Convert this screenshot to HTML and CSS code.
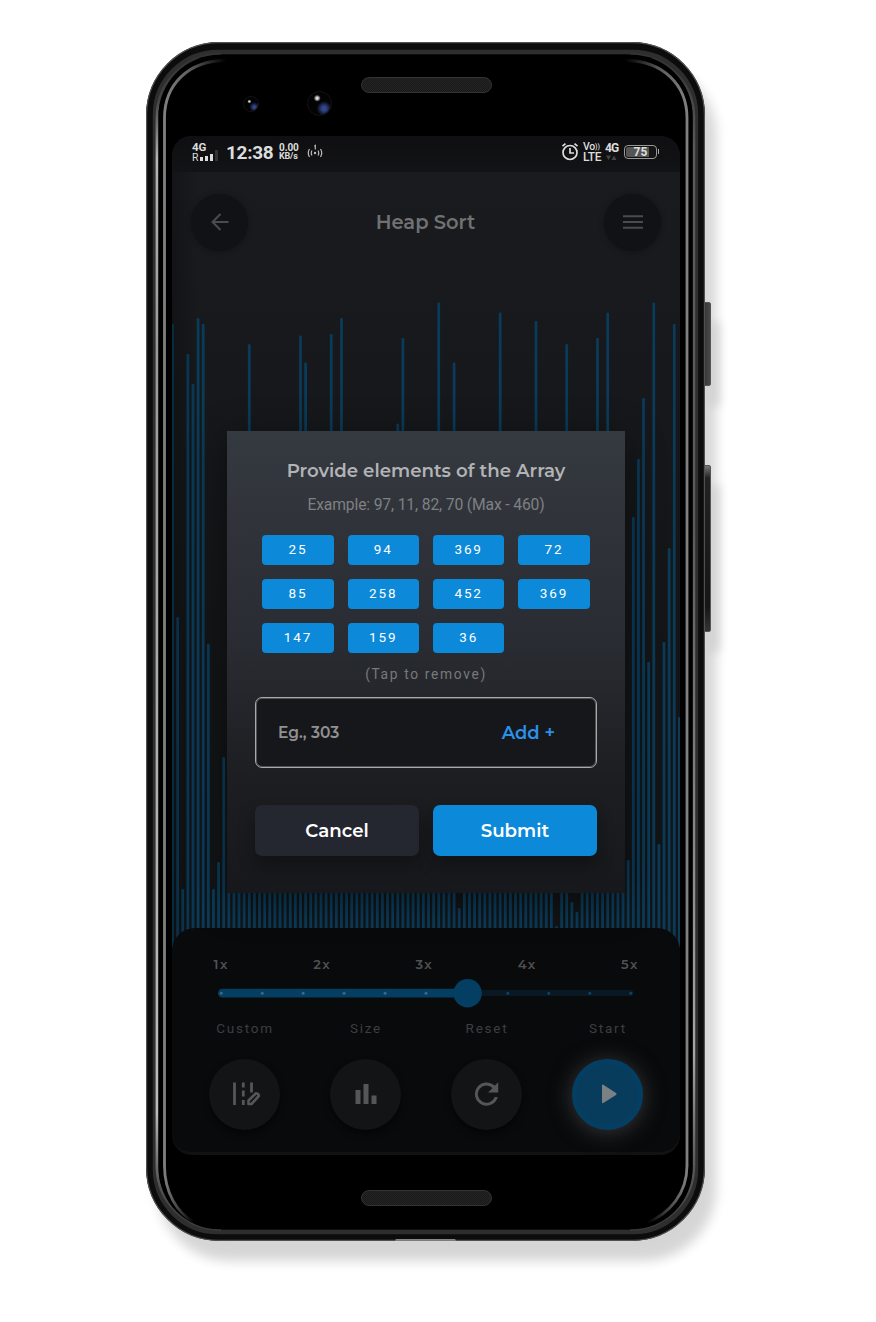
FILE: index.html
```
<!DOCTYPE html>
<html lang="en">
<head>
<meta charset="utf-8">
<title>Heap Sort</title>
<link rel="stylesheet" href="styles.css">
</head>
<body>
<div class="phone">
  <div class="side-button power"></div>
  <div class="side-button volume"></div>
  <svg class="frame" viewBox="0 0 559 1199" width="559" height="1199" fill="none">
    <defs>
      <linearGradient id="edge" x1="0" y1="0" x2="0" y2="1"><stop offset="0" stop-color="#333"/><stop offset=".04" stop-color="#444"/><stop offset=".09" stop-color="#b5b5b5"/><stop offset=".25" stop-color="#999"/><stop offset=".5" stop-color="#aaa"/><stop offset=".9" stop-color="#bbb"/><stop offset=".96" stop-color="#555"/><stop offset="1" stop-color="#3a3a3a"/></linearGradient>
      <linearGradient id="edgeR" x1="0" y1="0" x2="0" y2="1"><stop offset="0" stop-color="#333"/><stop offset=".08" stop-color="#5a5a5a"/><stop offset=".4" stop-color="#5a5a5a"/><stop offset=".85" stop-color="#a5a5a5"/><stop offset=".95" stop-color="#555"/><stop offset="1" stop-color="#3a3a3a"/></linearGradient>
      <linearGradient id="fadeL" gradientUnits="userSpaceOnUse" x1="18" y1="0" x2="80" y2="0"><stop stop-color="#808080"/><stop offset=".4" stop-color="#606060"/><stop offset="1" stop-color="#000"/></linearGradient>
      <linearGradient id="fadeR" gradientUnits="userSpaceOnUse" x1="541" y1="0" x2="479" y2="0"><stop stop-color="#808080"/><stop offset=".4" stop-color="#606060"/><stop offset="1" stop-color="#000"/></linearGradient>
      <linearGradient id="lowL" gradientUnits="userSpaceOnUse" x1="18" y1="0" x2="48" y2="0"><stop stop-color="#808080"/><stop offset="1" stop-color="#000"/></linearGradient>
      <linearGradient id="lowR" gradientUnits="userSpaceOnUse" x1="541" y1="0" x2="501" y2="0"><stop stop-color="#808080"/><stop offset="1" stop-color="#000"/></linearGradient>
    </defs>
    <rect x="0" y="0" width="559" height="1199" rx="73" fill="#0c0c0c"/>
    <rect x=".6" y=".6" width="557.8" height="1197.8" rx="72.4" stroke="#505050" stroke-width="1.2"/>
    <rect x="9" y="10" width="541" height="1180" rx="63" stroke="#2e2e2e" stroke-width="4.500"/>
    <path d="M75 12C40 12 11 40 11 75V1124C11 1160 40 1187.500 75 1187.500" stroke="url(#edge)" stroke-width="2.800"/>
    <path d="M484 12C519 12 548 40 548 75V1124C548 1160 519 1187.500 484 1187.500" stroke="url(#edgeR)" stroke-width="2.500"/>
    <rect x="12.500" y="12.800" width="534" height="1174.500" rx="61" fill="#000"/>
    <path d="M80 18.500C42 18.500 18.500 43 18.500 76V1124" stroke="url(#fadeL)" stroke-width="2.800"/>
    <path d="M479 18.500C517 18.500 541 43 541 76V1124" stroke="url(#fadeR)" stroke-width="2.800"/>
    <path d="M18.500 1123.500C18.500 1150 31 1171 48 1180" stroke="url(#lowL)" stroke-width="2.800"/>
    <path d="M541 1123.500C541 1151 524 1172 500 1181" stroke="url(#lowR)" stroke-width="2.800"/>
    <path d="M249 1198.500h61l-1-1.300h-59z" fill="#aaa"/>
  </svg>

  <div class="forehead">
    <i class="lens small"></i><i class="lens big"></i><i class="speaker"></i>
  </div>

  <div class="screen">
    <div class="status">
      <div class="net"><b>4G</b><span class="signal">R<i></i><i></i><i></i><i></i></span></div>
      <b class="clock">12:38</b>
      <div class="rate"><b>0.00</b><b>KB/s</b></div>
      <svg class="cast" width="16" height="16" viewBox="0 0 16 16" fill="none" stroke="#bbb" stroke-width="1.200"><circle cx="8" cy="9" r=".6"/><path d="M5 6.500Q3.500 9 5 11.500M2.500 5Q0 9 2.500 13M11 6.500Q12.500 9 11 11.500M13.500 5Q16 9 13.500 13M7.300 2.200L8.300 1.500V5.500"/></svg>
      <span class="grow"></span>
      <svg class="alarm" width="18" height="19" viewBox="0 0 18 19" fill="none" stroke="#ddd" stroke-width="1.700"><circle cx="9" cy="10.500" r="7"/><path d="M9 6V11H13M1.500 4.200L4.500 1.700M16.500 4.200L13.500 1.700"/></svg>
      <div class="lte"><span>Vo<small>))</small></span><span>LTE</span></div>
      <div class="data"><b>4G</b><svg width="12" height="6" viewBox="0 0 12 6" fill="#444"><path d="M1 .5h5L3.500 5zM6.500 5h5L9 .5z"/></svg></div>
      <div class="battery"><b>75</b></div><i class="battery-tip"></i>
    </div>

    <div class="appbar">
      <div class="round"><svg width="20" height="20" viewBox="0 0 20 20" fill="none" stroke="#4b4b4c" stroke-width="2"><path d="M18.500 10H3M10.500 2L2.500 10L10.500 18"/></svg></div>
      <h1>Heap Sort</h1>
      <div class="round"><svg width="20" height="14" viewBox="0 0 20 14" stroke="#4b4b4c" stroke-width="2"><path d="M0 1.300H20M0 7H20M0 12.700H20"/></svg></div>
    </div>

    <svg class="chart" id="chart" width="508" height="675" viewBox="172 272 508 675"></svg>

    <div class="panel">
      <div class="speeds"><span>1x</span><span>2x</span><span>3x</span><span>4x</span><span>5x</span></div>
      <svg class="slider" width="416" height="30" viewBox="218 978 416 30">
        <rect x="222" y="990" width="411.500" height="6" rx="3" fill="#0a1823"/>
        <rect x="218" y="988.800" width="252" height="8.700" rx="4.300" fill="#043f62"/>
        <g fill="#3a6a85"><circle cx="221.300" cy="993.200" r="1.500"/><circle cx="262.200" cy="993.200" r="1.500"/><circle cx="303.100" cy="993.200" r="1.500"/><circle cx="344.100" cy="993.200" r="1.500"/><circle cx="385.100" cy="993.200" r="1.500"/><circle cx="426" cy="993.200" r="1.500"/></g>
        <g fill="#0a4468"><circle cx="507.800" cy="993.200" r="1.500"/><circle cx="548.800" cy="993.200" r="1.500"/><circle cx="589.800" cy="993.200" r="1.500"/><circle cx="630.800" cy="993.200" r="1.500"/></g>
        <circle cx="467.600" cy="993.200" r="14.200" fill="#043f63"/>
      </svg>
      <div class="actions">
        <div class="action"><span>Custom</span><div class="disc">
          <svg width="32" height="32" viewBox="0 0 32 32" fill="none" stroke="#555658" stroke-width="2.800"><path d="M5.500 4.500V27M14.300 4.500V9.500M14.300 12.500V18.500M14.300 22V27M22.500 4.500V14.500"/><path d="M19.500 26V22.500L27 15.200Q30 15.500 29.800 18L22.500 26Z" stroke-width="2.600" stroke-linejoin="round"/></svg></div></div>
        <div class="action"><span>Size</span><div class="disc">
          <svg width="32" height="32" viewBox="0 0 32 32" fill="#555658"><path d="M5.500 12h5v14h-5zM13.500 6h5v20h-5zM21.500 17.500h5V26h-5z"/></svg></div></div>
        <div class="action"><span>Reset</span><div class="disc">
          <svg width="32" height="32" viewBox="0 0 32 32" fill="#555658"><path d="M23.700 7.800A11.600 11.600 0 1 0 26.800 19H23.700A8.700 8.700 0 1 1 21.600 9.900L17 14.500H27.200V4.300Z"/></svg></div></div>
        <div class="action"><span>Start</span><div class="disc start">
          <svg width="32" height="32" viewBox="0 0 32 32" fill="#7b8083"><path d="M10 7.500Q10 6 11.300 6.800L24 15Q25.300 16 24 17L11.300 25Q10 25.800 10 24.300Z"/></svg></div></div>
      </div>
    </div>

    <div class="modal">
      <h2>Provide elements of the Array</h2>
      <p class="example">Example: 97, 11, 82, 70 (Max - 460)</p>
      <div class="chips"><b>25</b><b>94</b><b>369</b><b>72</b><b>85</b><b>258</b><b>452</b><b>369</b><b>147</b><b>159</b><b>36</b></div>
      <p class="hint">(Tap to remove)</p>
      <div class="entry"><span class="placeholder">Eg., 303</span><span class="add">Add +</span></div>
      <div class="buttons"><div class="btn cancel"><span>Cancel</span></div><div class="btn submit"><span>Submit</span></div></div>
    </div>
  </div>

  <div class="chin"><i class="speaker"></i></div>
</div>
<script src="chart.js"></script>
</body>
</html>
```
FILE: chart.js
```
// Top edge of each bar; bars not listed reach the default height.
const tops = {0:324,1:617,2:889,3:354,4:384,5:318,6:324,7:644,8:889,9:862,10:757,15:344,25:335.5,26:362.5,31:334,33:318,44:423.5,45:338,52:302.5,55:362.5,56:908,64:312.5,71:321,75:926,77:344,78:902,79:912,83:338,85:312.5,89:860,90:517,91:459,92:398,93:662,94:302.5,95:844,96:642,97:548,98:324,99:717};
let markup = '';
for (let i = 0; i < 100; i++) {
  const top = tops[i] || 600;
  const x = 172.5 + i * 5.12 - 1.4;
  markup += `<rect x="${x.toFixed(2)}" y="${top}" width="2.8" height="${960 - top}" rx="1.2"/>`;
}
document.getElementById('chart').innerHTML = markup;
```
FILE: styles.css
```
* { box-sizing: border-box; }
body { margin: 0; width: 876px; height: 1322px; background: #fff; font-family: Roboto, sans-serif; overflow: hidden; }
h1, h2, p { margin: 0; }
i { display: block; }
.phone { position: relative; width: 559px; height: 1199px; margin: 42px 0 0 146px; border-radius: 73px; box-shadow: 11px 20px 12px rgba(0,0,0,.165); }
.frame { position: absolute; left: 0; top: 0; display: block; }
.side-button { position: absolute; left: 556px; width: 9px; border: 1px solid #555; border-radius: 2px; background: linear-gradient(90deg, #333, #484848); box-shadow: 10px 20px 10px rgba(0,0,0,.1); }
.power { top: 260px; height: 84px; }
.volume { top: 423px; height: 167px; background: linear-gradient(#777, #222 12px, #161616 140px, #333); }
.forehead, .chin { position: relative; height: 94px; }
.speaker { position: absolute; left: 215px; top: 35px; width: 131px; height: 16px; border-radius: 8px; border: 1px solid #333; background: repeating-conic-gradient(#191919 0 25%, #242424 0 50%) 0 0 / 2px 2px; }
.lens { position: absolute; border-radius: 50%; border: 1px solid #131313; }
.small { left: 97px; top: 54px; width: 16px; height: 16px; background: radial-gradient(circle at 38% 32%, #ddd 0 .5px, transparent 2px), radial-gradient(circle at 74% 72%, #33458f 0 1px, transparent 5px), #020202; }
.big { left: 161px; top: 49px; width: 25px; height: 25px; background: radial-gradient(circle at 40% 27%, #ddd 0 1px, transparent 3.500px), radial-gradient(circle at 70% 72%, #32458f 0 2px, transparent 7.500px), #030303; }
.screen { position: relative; margin-left: 26px; width: 508px; height: 1018.500px; border-radius: 20px; overflow: hidden; background: linear-gradient(#191b1f 0, #181a1d 12%, #16181b 25%, #141517 50%, #111214 100%); }
.screen::before { content: ""; position: absolute; inset: 0 auto 0 0; width: 26px; background: linear-gradient(90deg, rgba(0,0,0,.25), transparent); }
.status { height: 36px; display: flex; align-items: flex-start; padding: 6px 21px 0 20px; background: linear-gradient(#0f0f12, #121315); color: #ddd; position: relative; }
.net { width: 28px; margin-right: 6px; font-size: 11.500px; line-height: 9px; }
.net b { display: block; height: 9px; letter-spacing: -.1px; margin-top: 1px; }
.signal { display: flex; align-items: flex-end; gap: 2px; font-size: 10.500px; line-height: 9px; }
.signal i { width: 3px; height: 4px; margin-bottom: 1px; background: #ddd; }
.signal i:nth-of-type(2) { height: 5px; }
.signal i:nth-of-type(3) { height: 7px; }
.signal i:nth-of-type(4) { height: 11px; background: #333; margin-top: -2px; }
.clock { font-size: 19px; line-height: 22px; width: 47px; margin-right: 6px; white-space: nowrap; letter-spacing: -.3px; }
.rate { width: 22px; font-size: 10px; line-height: 9px; margin-top: 1px; letter-spacing: -.1px; }
.rate b { display: block; }
.rate b + b { font-size: 9px; letter-spacing: -.2px; }
.cast { margin: 2px 0 0 6px; }
.grow { flex: 1; }
.alarm { margin-right: 4px; }
.lte { font-size: 12px; line-height: 10px; width: 19px; margin-right: 3px; font-weight: 500; }
.lte span { display: block; white-space: nowrap; letter-spacing: -.3px; }
.lte span:first-child { font-size: 10.500px; line-height: 10px; height: 10px; }
.lte small { font-size: 7px; vertical-align: 1px; letter-spacing: .2px; line-height: 1; }
.data { width: 14px; font-size: 12px; line-height: 13px; margin: 0 5px 0 0; }
.data b { display: block; letter-spacing: -.9px; }
.data svg { display: block; margin-top: 0; }
.battery { width: 33px; height: 14px; margin-top: 3px; border: 1px solid #999; border-radius: 4px; background: linear-gradient(90deg, #555 23px, #151515 23px) content-box; padding: 1px; font-size: 12px; line-height: 11px; text-align: center; }
.battery-tip { width: 1px; height: 5px; margin: 7px 0 0 1px; background: #aaa; }
.appbar { height: 100px; padding: 0 19px; display: flex; align-items: center; justify-content: space-between; position: relative; }
.round { width: 57px; height: 57px; border-radius: 50%; background: #111215; display: grid; place-items: center; box-shadow: 0 1px 5px rgba(14,15,17,.6); }
h1 { font: 600 19.500px/24px Montserrat, Inter, sans-serif; letter-spacing: -.05px; padding-right: 1px; color: #707172; }
.chart { display: block; fill: #0a3b59; }
.panel { position: relative; margin-top: -19px; height: 224px; border-radius: 23px 23px 20px 20px; background: #090a0c; padding-top: 27px; }
.speeds { display: flex; justify-content: space-between; padding: 0 41px 0 41.500px; font: 600 13px/18px Montserrat, Inter, sans-serif; letter-spacing: 1.500px; color: #505152; }
.slider { display: block; margin: 5px 0 0 46px; }
.actions { display: flex; gap: 50px; margin: 10px 0 0 37px; }
.action { width: 71px; text-align: center; font-size: 13.500px; line-height: 21px; letter-spacing: 1.750px; color: #3e3e40; }
.action > span { display: block; padding-left: 1px; }
.disc { width: 71px; height: 71px; border-radius: 50%; margin-top: 19.500px; display: grid; place-items: center; background: #131416; box-shadow: 0 4px 6px rgba(0,0,0,.5); }
.start { background: #083c5c; border: 5px solid #043f63; box-shadow: 0 2px 22px #38383a; }
.modal { position: absolute; left: 55px; top: 295px; width: 398px; height: 462px; padding: 28px 28px 0; background: linear-gradient(#353940, #292c32 45%, #1d1e22 75%, #17181b); box-shadow: 0 8px 36px rgba(0,0,0,.45); text-align: center; }
h2 { font: 600 18.200px/23px Montserrat, Inter, sans-serif; color: #b2b3b5; white-space: nowrap; }
.example { margin-top: 13px; font-size: 15.700px; line-height: 20px; letter-spacing: -.15px; color: #7e8083; white-space: nowrap; }
.chips { display: grid; grid-template-columns: repeat(4, 71.300px); gap: 14px; margin: 20px 0 0 7.400px; }
.chips b { height: 30px; border-radius: 4px; background: #0c89d8; color: #fff; font: 400 13.500px/28px Roboto, sans-serif; letter-spacing: 1.900px; }
.hint { margin-top: 13px; font-size: 13.800px; line-height: 16px; letter-spacing: 1.650px; color: #77797c; }
.entry { height: 71px; margin-top: 15px; border: 1px solid #a9a9aa; border-radius: 7px; background: #16171a; box-shadow: inset 0 0 0 1px rgba(169,169,170,.4); display: flex; justify-content: space-between; align-items: center; padding: 0 41px 0 22px; font-family: Montserrat, Inter, sans-serif; }
.placeholder { color: #919192; font-size: 15.500px; font-weight: 600; letter-spacing: 0; }
.add { color: #2a90e8; font-size: 18px; font-weight: 600; letter-spacing: -.1px; }
.buttons { display: grid; grid-template-columns: 1fr 1fr; gap: 14px; margin-top: 37px; }
.btn { height: 51px; border-radius: 7px; font: 600 18.200px/51px Montserrat, Inter, sans-serif; color: #fff; box-shadow: 0 9px 16px rgba(8,9,12,.45); }
.cancel { background: #252730; }
.submit { background: #0c89d8; }
```
